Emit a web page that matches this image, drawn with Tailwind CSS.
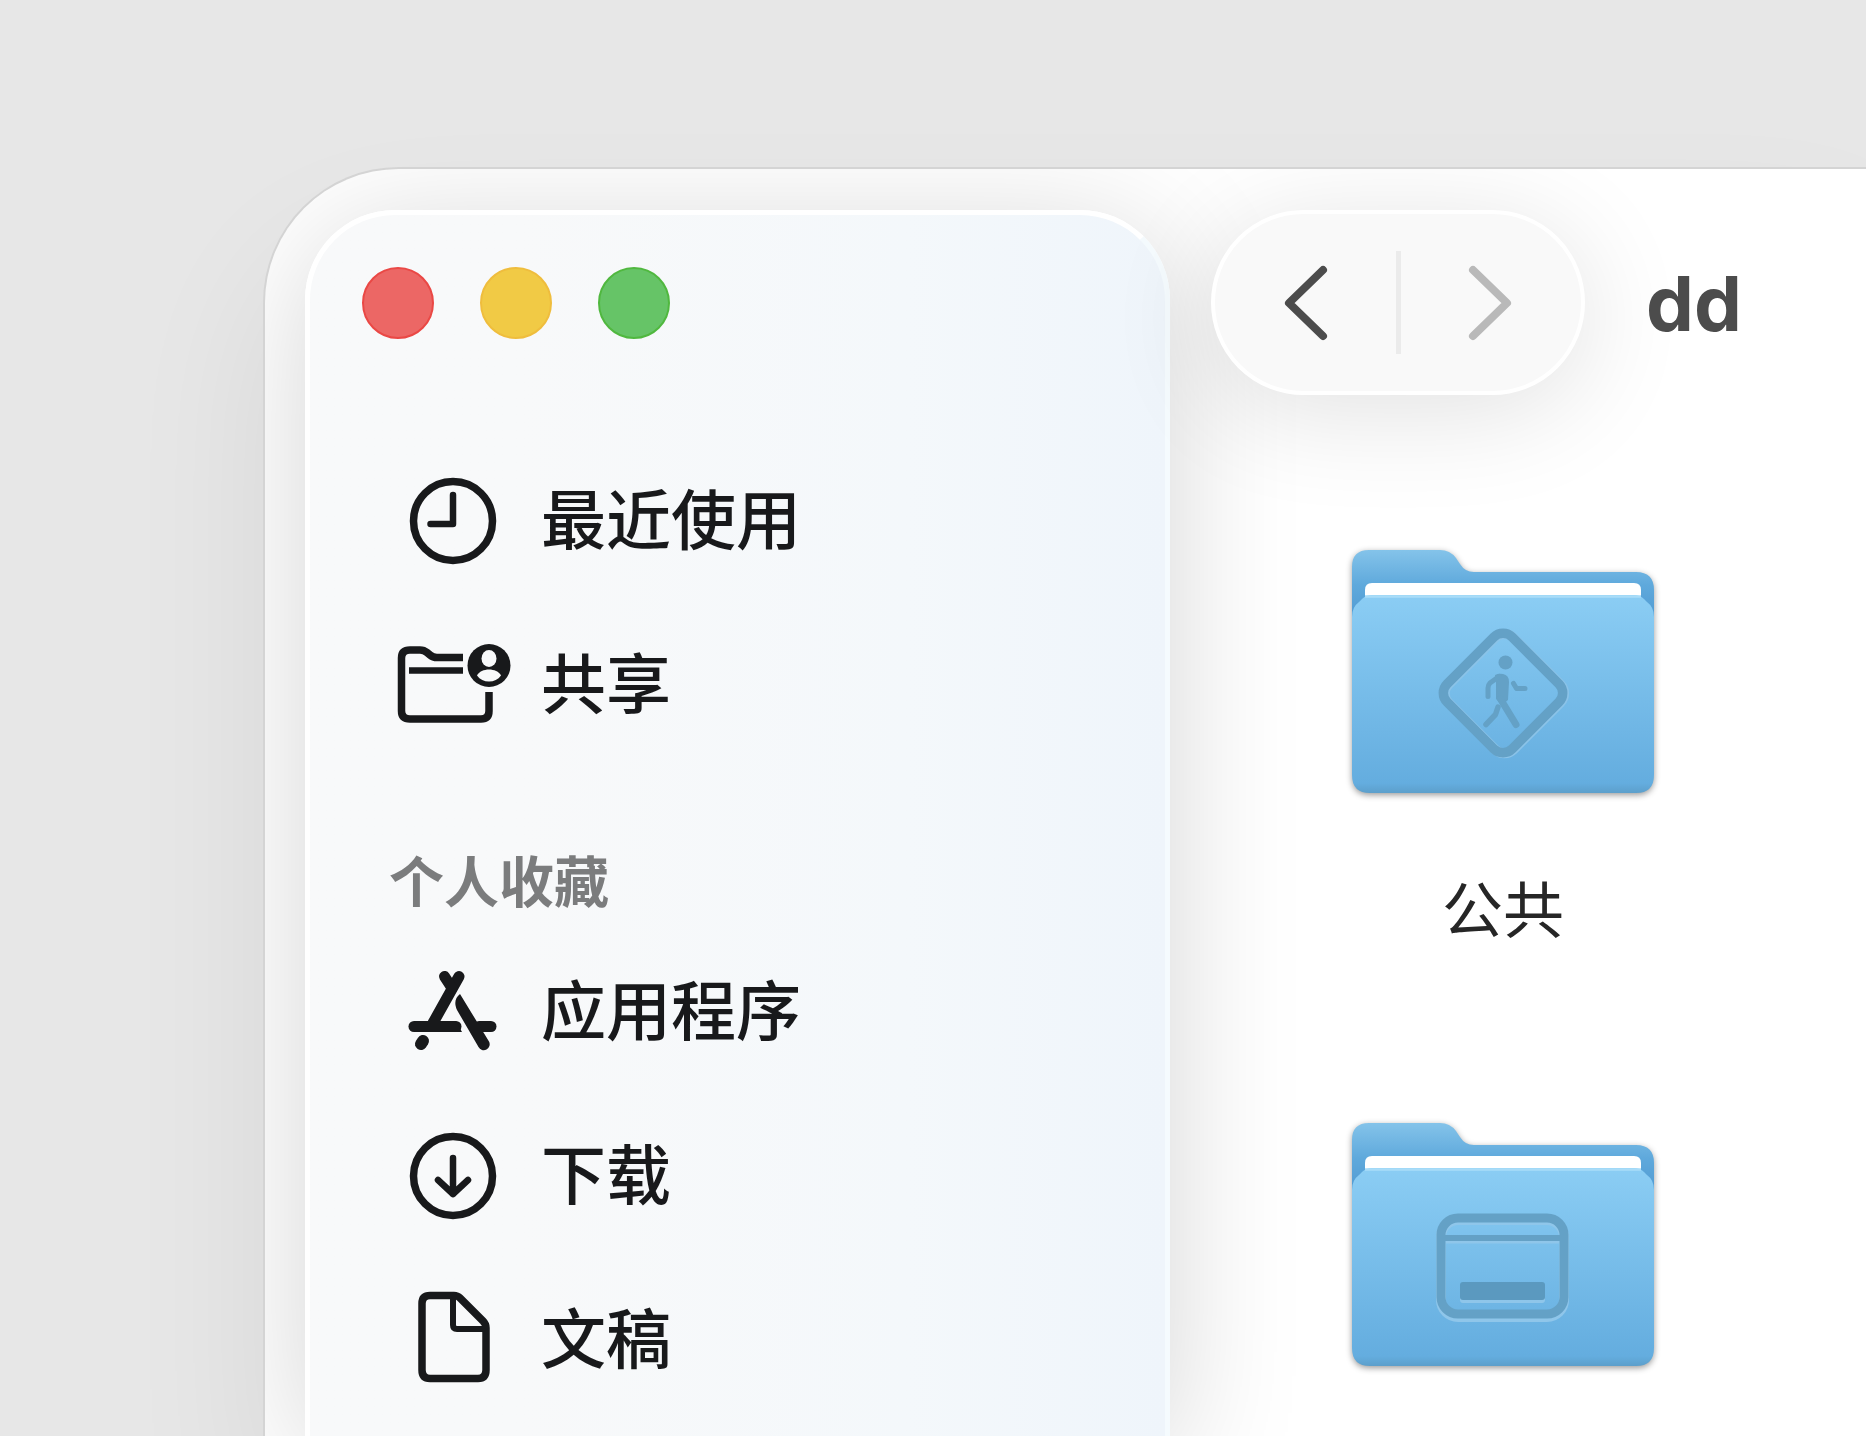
<!doctype html>
<html lang="zh-CN">
  <head>
    <meta charset="UTF-8" />
    <meta name="viewport" content="width=device-width, initial-scale=1.0" />
    <title>dd</title>
    <script src="https://cdn.jsdelivr.net/npm/@tailwindcss/browser@4"></script>
  </head>

  <body
    class="flex h-screen overflow-hidden bg-[#e7e7e7] pt-[169px] pl-[265px]
      font-['Inter','Noto_Sans_CJK_SC',sans-serif] text-[#18191b]"
  >
    <!-- Finder window, runs off the right and bottom edges -->
    <div
      class="flex flex-1 rounded-tl-[134px] bg-white
        shadow-[0_0_0_2px_#d4d4d4,0_80px_150px_rgba(0,0,0,0.07)]"
    >
      <div class="flex flex-1 overflow-hidden rounded-tl-[134px] pt-[41px] pl-10">
        <!-- Sidebar -->
        <aside
          class="w-[865px] shrink-0 rounded-t-[90px] border-5 border-b-0 border-white border-r-[#f5fbfe]
            bg-linear-to-r from-[#f8f9fa] from-25% via-[#f4f8fb] via-70% to-[#eff5fb]
            shadow-[0_20px_130px_rgba(0,0,0,0.17)]"
        >
          <div
            class="flex gap-[46px] pt-13 pl-[52px] *:size-18 *:cursor-pointer *:rounded-full *:border-2"
          >
            <button
              class="border-[#ea4845] bg-[#ec6765]"
              type="button"
              aria-label="关闭"
            ></button>
            <button
              class="border-[#efbd3d] bg-[#f1ca45]"
              type="button"
              aria-label="最小化"
            ></button>
            <button
              class="border-[#50b83f] bg-[#66c467]"
              type="button"
              aria-label="全屏"
            ></button>
          </div>

          <nav class="pt-[100px] pl-[79px] text-[65px] font-medium">
            <ul class="*:h-[164px]">
              <li>
                <a href="#" class="flex h-full items-center gap-6">
                  <svg
                    class="h-30 w-32"
                    viewBox="0 0 128 120"
                    fill="none"
                    stroke="currentColor"
                    aria-hidden="true"
                  >
                    <circle cx="64" cy="60" r="39.5" stroke-width="7.5" />
                    <path
                      d="M64 34V63H41.5"
                      stroke-width="6.5"
                      stroke-linecap="round"
                      stroke-linejoin="round"
                    />
                  </svg>
                  最近使用
                </a>
              </li>
              <li>
                <a href="#" class="flex h-full items-center gap-6">
                  <svg
                    class="h-30 w-32"
                    viewBox="0 0 128 120"
                    fill="none"
                    stroke="currentColor"
                    stroke-width="7.5"
                    aria-hidden="true"
                  >
                    <path
                      d="M100 67V86Q100 94 92 94H21Q12.5 94 12.5 86V33Q12.5 25 21 25H31Q35 25 38 27.5L41 30Q44 32.5 48 32.5H74"
                    />
                    <path d="M20 45.5H74" stroke-width="6.5" />
                    <circle cx="100" cy="40.5" r="21.5" fill="currentColor" stroke="none" />
                    <ellipse cx="100" cy="33.5" rx="7.5" ry="8.5" fill="#f8f9fa" stroke="none" />
                    <path
                      d="M88 50.5C90 46.5 95 44.5 100 44.5S110 46.5 112 50.5C109 54.5 105 56.5 100 56.5S91 54.5 88 50.5Z"
                      fill="#f8f9fa"
                      stroke="none"
                    />
                  </svg>
                  共享
                </a>
              </li>
            </ul>

            <h2
              class="mt-[67px] flex h-24 items-center text-[55px] leading-none font-bold text-[#7b7c7d]"
            >
              个人收藏
            </h2>
            <ul class="*:h-[164px]">
              <li>
                <a href="#" class="flex h-full items-center gap-6">
                  <svg
                    class="h-30 w-32"
                    viewBox="0 0 128 120"
                    fill="none"
                    stroke="currentColor"
                    stroke-width="11"
                    stroke-linecap="round"
                    aria-hidden="true"
                  >
                    <path d="M70 24.5L44 71" />
                    <path d="M55.5 24.5L63 36" />
                    <path d="M25 74.5H67" />
                    <path d="M62 69H67L73 80H62Z" fill="currentColor" stroke="none" />
                    <path d="M90 74.5H102" />
                    <path
                      d="M71 42C66 46 65 51 68 58L89.5 95A5.6 5.6 0 0 0 100 89.5Z"
                      fill="currentColor"
                      stroke="none"
                    />
                    <path d="M32 92L34 89" stroke-width="12" />
                  </svg>
                  应用程序
                </a>
              </li>
              <li>
                <a href="#" class="flex h-full items-center gap-6">
                  <svg
                    class="h-30 w-32"
                    viewBox="0 0 128 120"
                    fill="none"
                    stroke="currentColor"
                    aria-hidden="true"
                  >
                    <circle cx="64" cy="60" r="39.5" stroke-width="7.5" />
                    <path
                      d="M64 42V78M49 64L64 78L79 64"
                      stroke-width="6.5"
                      stroke-linecap="round"
                      stroke-linejoin="round"
                    />
                  </svg>
                  下载
                </a>
              </li>
              <li>
                <a href="#" class="flex h-full items-center gap-6">
                  <svg
                    class="h-30 w-32"
                    viewBox="0 0 128 120"
                    fill="none"
                    stroke="currentColor"
                    stroke-width="7.5"
                    stroke-linejoin="round"
                    aria-hidden="true"
                  >
                    <path
                      d="M41 15.5H65Q68.5 15.5 71 18L94 41Q97 44 97 48V90Q97 98.5 89 98.5H41Q33 98.5 33 90V23.5Q33 15.5 41 15.5Z"
                    />
                    <path d="M64 16V45Q64 49 68 49H97" stroke-width="6" />
                  </svg>
                  文稿
                </a>
              </li>
            </ul>
          </nav>
        </aside>

        <main class="min-w-0 flex-1 pl-[41px]">
          <!-- Toolbar -->
          <header class="flex items-center gap-[61px]">
            <div
              class="flex h-[185px] w-[374px] shrink-0 items-center justify-between rounded-full border-4
                border-white bg-[#f9f9f9] px-[68px] shadow-[0_16px_110px_rgba(0,0,0,0.12)]"
            >
              <button type="button" class="cursor-pointer text-[#4c4c4c]" aria-label="后退">
                <svg
                  class="h-20 w-12"
                  viewBox="0 0 48 80"
                  fill="none"
                  stroke="currentColor"
                  stroke-width="8"
                  stroke-linecap="round"
                  stroke-linejoin="round"
                >
                  <path d="M40 7L6 40L40 73" />
                </svg>
              </button>
              <span class="h-[103px] w-[5px] bg-[#ebebeb]"></span>
              <button type="button" class="text-[#b9b9b9]" aria-label="前进" disabled>
                <svg
                  class="h-20 w-12"
                  viewBox="0 0 48 80"
                  fill="none"
                  stroke="currentColor"
                  stroke-width="8"
                  stroke-linecap="round"
                  stroke-linejoin="round"
                >
                  <path d="M8 7L42 40L8 73" />
                </svg>
              </button>
            </div>
            <h1 class="text-[76px] leading-none font-bold text-[#4c4c4c]">dd</h1>
          </header>

          <!-- Folders -->
          <div
            class="grid grid-cols-[repeat(auto-fill,302px)] gap-x-60 pt-[154px] pl-[141px] *:h-[573px]"
          >
            <figure class="flex flex-col items-center gap-[71px]">
              <svg
                class="h-[246px] w-[302px] shrink-0 overflow-visible drop-shadow-[0_2px_3px_rgba(0,0,0,0.4)]"
                viewBox="0 0 302 246"
                fill="none"
                aria-hidden="true"
              >
                <defs>
                  <linearGradient id="back" x1="0" y1="0" x2="0" y2="60" gradientUnits="userSpaceOnUse">
                    <stop stop-color="#85c4ea" />
                    <stop offset="0.6" stop-color="#5fa9dc" />
                    <stop offset="1" stop-color="#559fd5" />
                  </linearGradient>
                  <linearGradient id="front" x1="0" y1="46" x2="0" y2="244" gradientUnits="userSpaceOnUse">
                    <stop stop-color="#8bcdf4" />
                    <stop offset="0.95" stop-color="#64addf" />
                    <stop offset="1" stop-color="#5c9fcb" />
                  </linearGradient>
                </defs>
                <path
                  d="M0 80V18Q0 1 17 1H88Q98 1 104 9L108 15Q113 23 122 23H284Q302 23 302 41V80Z"
                  fill="url(#back)"
                />
                <path d="M13 60V41Q13 34 20 34H282Q289 34 289 41V60Z" fill="#fff" />
                <path
                  d="M0 68Q0 58 7 53L10 50Q14 46 20 46H282Q288 46 292 50L295 53Q302 58 302 68V226Q302 244 284 244H18Q0 244 0 226Z"
                  fill="url(#front)"
                />
                <path d="M13 47.5H289" stroke="#a9dcf8" stroke-width="2.5" />
                <!-- pedestrian sign, light copy underneath for the embossed edge -->
                <rect
                  x="105" y="98" width="92" height="92" rx="13"
                  transform="rotate(45 151 146)"
                  stroke="#8bc3e8"
                  stroke-width="10"
                />
                <g stroke="#64a1c6" stroke-linecap="round" stroke-linejoin="round">
                  <rect
                    x="105" y="98" width="92" height="92" rx="13"
                    transform="rotate(45 151 144)"
                    stroke-width="9.5"
                  />
                  <circle cx="153.5" cy="113.5" r="7" fill="#64a1c6" stroke="none" />
                  <path
                    d="M143 126Q147 124 151 125Q157 126 157 133L156 151L150 156L144 150V134Z"
                    fill="#64a1c6"
                    stroke="none"
                  />
                  <path d="M147 127.5L138 134Q136 136 136 139V147.5" stroke-width="5" />
                  <path d="M161.5 134.5L164.5 139.5H173" stroke-width="5" />
                  <path d="M148.5 150L164 175.5" stroke-width="7" />
                  <path d="M146 158L143.5 165.5L134 175.5" stroke-width="5.5" />
                </g>
              </svg>
              <figcaption class="text-[61px] leading-[90px] text-[#262626]">公共</figcaption>
            </figure>

            <figure class="flex flex-col items-center gap-[71px]">
              <svg
                class="h-[246px] w-[302px] shrink-0 overflow-visible drop-shadow-[0_2px_3px_rgba(0,0,0,0.4)]"
                viewBox="0 0 302 246"
                fill="none"
                aria-hidden="true"
              >
                <path
                  d="M0 80V18Q0 1 17 1H88Q98 1 104 9L108 15Q113 23 122 23H284Q302 23 302 41V80Z"
                  fill="url(#back)"
                />
                <path d="M13 60V41Q13 34 20 34H282Q289 34 289 41V60Z" fill="#fff" />
                <path
                  d="M0 68Q0 58 7 53L10 50Q14 46 20 46H282Q288 46 292 50L295 53Q302 58 302 68V226Q302 244 284 244H18Q0 244 0 226Z"
                  fill="url(#front)"
                />
                <path d="M13 47.5H289" stroke="#a9dcf8" stroke-width="2.5" />
                <!-- desktop with menu bar and dock -->
                <g stroke="#8fc6ea">
                  <rect x="89" y="98" width="123" height="97" rx="17" stroke-width="10" />
                  <path d="M92 118H209" stroke-width="7" />
                  <rect x="108" y="163" width="85" height="18" rx="3" fill="#8fc6ea" stroke="none" />
                </g>
                <g stroke="#64a1c6">
                  <rect x="89" y="96" width="123" height="96" rx="17" stroke-width="9" />
                  <path d="M92 116H209" stroke-width="6" />
                  <rect x="108" y="160" width="85" height="18" rx="3" fill="#5b99bf" stroke="none" />
                </g>
              </svg>
            </figure>
          </div>
        </main>
      </div>
    </div>
  </body>
</html>
